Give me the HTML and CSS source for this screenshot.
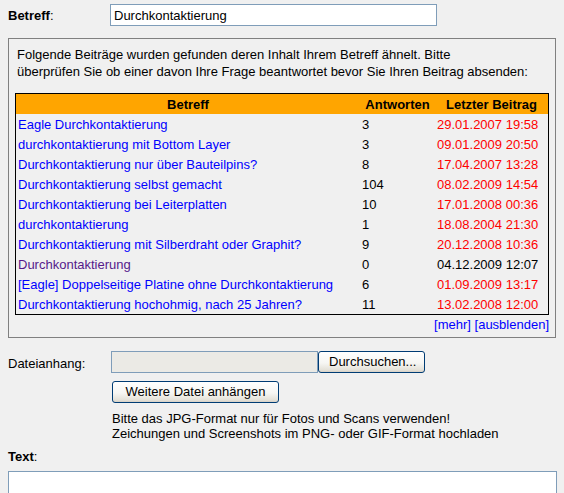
FILE: index.html
```html
<!DOCTYPE html>
<html lang="de">
<head>
<meta charset="utf-8">
<title>Beitrag schreiben</title>
<link rel="stylesheet" href="styles.css">
</head>
<body>
<div class="row subject">
  <label class="lbl"><b>Betreff</b>:</label>
  <input class="subject-input" type="text" value="Durchkontaktierung">
</div>

<div class="similar">
  <p class="intro">Folgende Beiträge wurden gefunden deren Inhalt Ihrem Betreff ähnelt. Bitte<br>überprüfen Sie ob einer davon Ihre Frage beantwortet bevor Sie Ihren Beitrag absenden:</p>
  <table class="hits">
    <thead>
      <tr><th class="c1">Betreff</th><th class="c2">Antworten</th><th class="c3">Letzter Beitrag</th></tr>
    </thead>
    <tbody>
      <tr><td><a href="#">Eagle Durchkontaktierung</a></td><td>3</td><td class="new">29.01.2007 19:58</td></tr>
      <tr><td><a href="#">durchkontaktierung mit Bottom Layer</a></td><td>3</td><td class="new">09.01.2009 20:50</td></tr>
      <tr><td><a href="#">Durchkontaktierung nur über Bauteilpins?</a></td><td>8</td><td class="new">17.04.2007 13:28</td></tr>
      <tr><td><a href="#">Durchkontaktierung selbst gemacht</a></td><td>104</td><td class="new">08.02.2009 14:54</td></tr>
      <tr><td><a href="#">Durchkontaktierung bei Leiterplatten</a></td><td>10</td><td class="new">17.01.2008 00:36</td></tr>
      <tr><td><a href="#">durchkontaktierung</a></td><td>1</td><td class="new">18.08.2004 21:30</td></tr>
      <tr><td><a href="#">Durchkontaktierung mit Silberdraht oder Graphit?</a></td><td>9</td><td class="new">20.12.2008 10:36</td></tr>
      <tr><td><a class="visited" href="#">Durchkontaktierung</a></td><td>0</td><td>04.12.2009 12:07</td></tr>
      <tr><td><a href="#">[Eagle] Doppelseitige Platine ohne Durchkontaktierung</a></td><td>6</td><td class="new">01.09.2009 13:17</td></tr>
      <tr><td><a href="#">Durchkontaktierung hochohmig, nach 25 Jahren?</a></td><td>11</td><td class="new">13.02.2008 12:00</td></tr>
    </tbody>
  </table>
  <div class="more"><a href="#">[mehr]</a> <a href="#">[ausblenden]</a></div>
</div>

<div class="row attach">
  <label class="lbl attach-lbl">Dateianhang:</label>
  <div class="field">
    <div class="file">
      <span class="filebox"></span><button class="btn browse" type="button">Durchsuchen...</button>
    </div>
    <button class="btn more-file" type="button">Weitere Datei anhängen</button>
    <p class="hint">Bitte das JPG-Format nur für Fotos und Scans verwenden!<br>Zeichungen und Screenshots im PNG- oder GIF-Format hochladen</p>
  </div>
</div>

<div class="textlbl"><b>Text</b>:</div>
<textarea class="body-text"></textarea>
</body>
</html>
```

FILE: styles.css
```css
html, body {
  margin: 0;
  background: #f0f0f0;
}
body {
  padding: 4px 8px 0;
  font-family: "Liberation Sans", Arial, sans-serif;
  font-size: 13px;
  color: #000;
  overflow: hidden;
}
.row {
  display: flex;
}
.subject {
  align-items: center;
  height: 22px;
}
.lbl {
  width: 102px;
  flex: none;
  line-height: 17px;
}
.subject-input {
  box-sizing: border-box;
  width: 327px;
  height: 22px;
  margin: 0;
  border: 1px solid #7f9db9;
  background: #fff;
  padding: 0 3px;
  font: 13px "Liberation Sans", Arial, sans-serif;
  color: #000;
  outline: none;
}
.similar {
  margin-top: 12px;
  border: 1px solid #808080;
  padding: 7px 6px 4px;
}
.intro {
  margin: 0;
  padding-left: 2px;
  line-height: 17px;
}
.hits {
  margin-top: 13px;
  width: 534px;
  table-layout: fixed;
  border: 1px solid #000;
  border-spacing: 0;
  border-collapse: separate;
}
.hits tr {
  height: 20px;
}
.hits th, .hits td {
  box-sizing: border-box;
  padding: 0 2px;
  line-height: 15px;
  vertical-align: middle;
  white-space: nowrap;
  overflow: hidden;
}
.hits th {
  background: #ffa500;
  font-weight: bold;
  text-align: center;
}
.hits .c1 { width: 344px; }
.hits .c2 { width: 75px; }
.hits .c3 { width: 113px; }
.hits td {
  text-align: left;
}
a {
  color: #0000ff;
  text-decoration: none;
}
a.visited {
  color: #551a8b;
}
.new {
  color: #ff0000;
}
.more {
  margin-top: 1px;
  text-align: right;
  line-height: 17px;
}
.attach {
  margin-top: 13px;
}
.attach-lbl {
  line-height: 22px;
  padding-top: 2px;
}
.field {
  display: flex;
  flex-direction: column;
  align-items: flex-start;
}
.file {
  display: flex;
  margin-left: 1px;
}
.filebox {
  box-sizing: border-box;
  width: 207px;
  height: 22px;
  border: 1px solid #7f9db9;
  background: #ebeae5;
}
.btn {
  box-sizing: border-box;
  height: 22px;
  margin: 0;
  border: 1px solid #003c74;
  border-radius: 3px;
  background: linear-gradient(#ffffff 0%, #f6f6f3 55%, #e4e1d8 90%, #d6d0c5 100%);
  font: 13px "Liberation Sans", Arial, sans-serif;
  color: #000;
  padding: 0 10px;
  line-height: 18px;
}
.browse {
  width: 107px;
}
.more-file {
  margin-top: 8px;
  margin-left: 2px;
  width: 167px;
}
.hint {
  margin: 8px 0 0 2px;
  line-height: 15px;
}
.textlbl {
  margin-top: 7px;
  line-height: 17px;
}
.body-text {
  display: block;
  box-sizing: border-box;
  margin-top: 6px;
  width: 549px;
  height: 60px;
  border: 1px solid #7f9db9;
  background: #fff;
  resize: none;
  outline: none;
}
```
